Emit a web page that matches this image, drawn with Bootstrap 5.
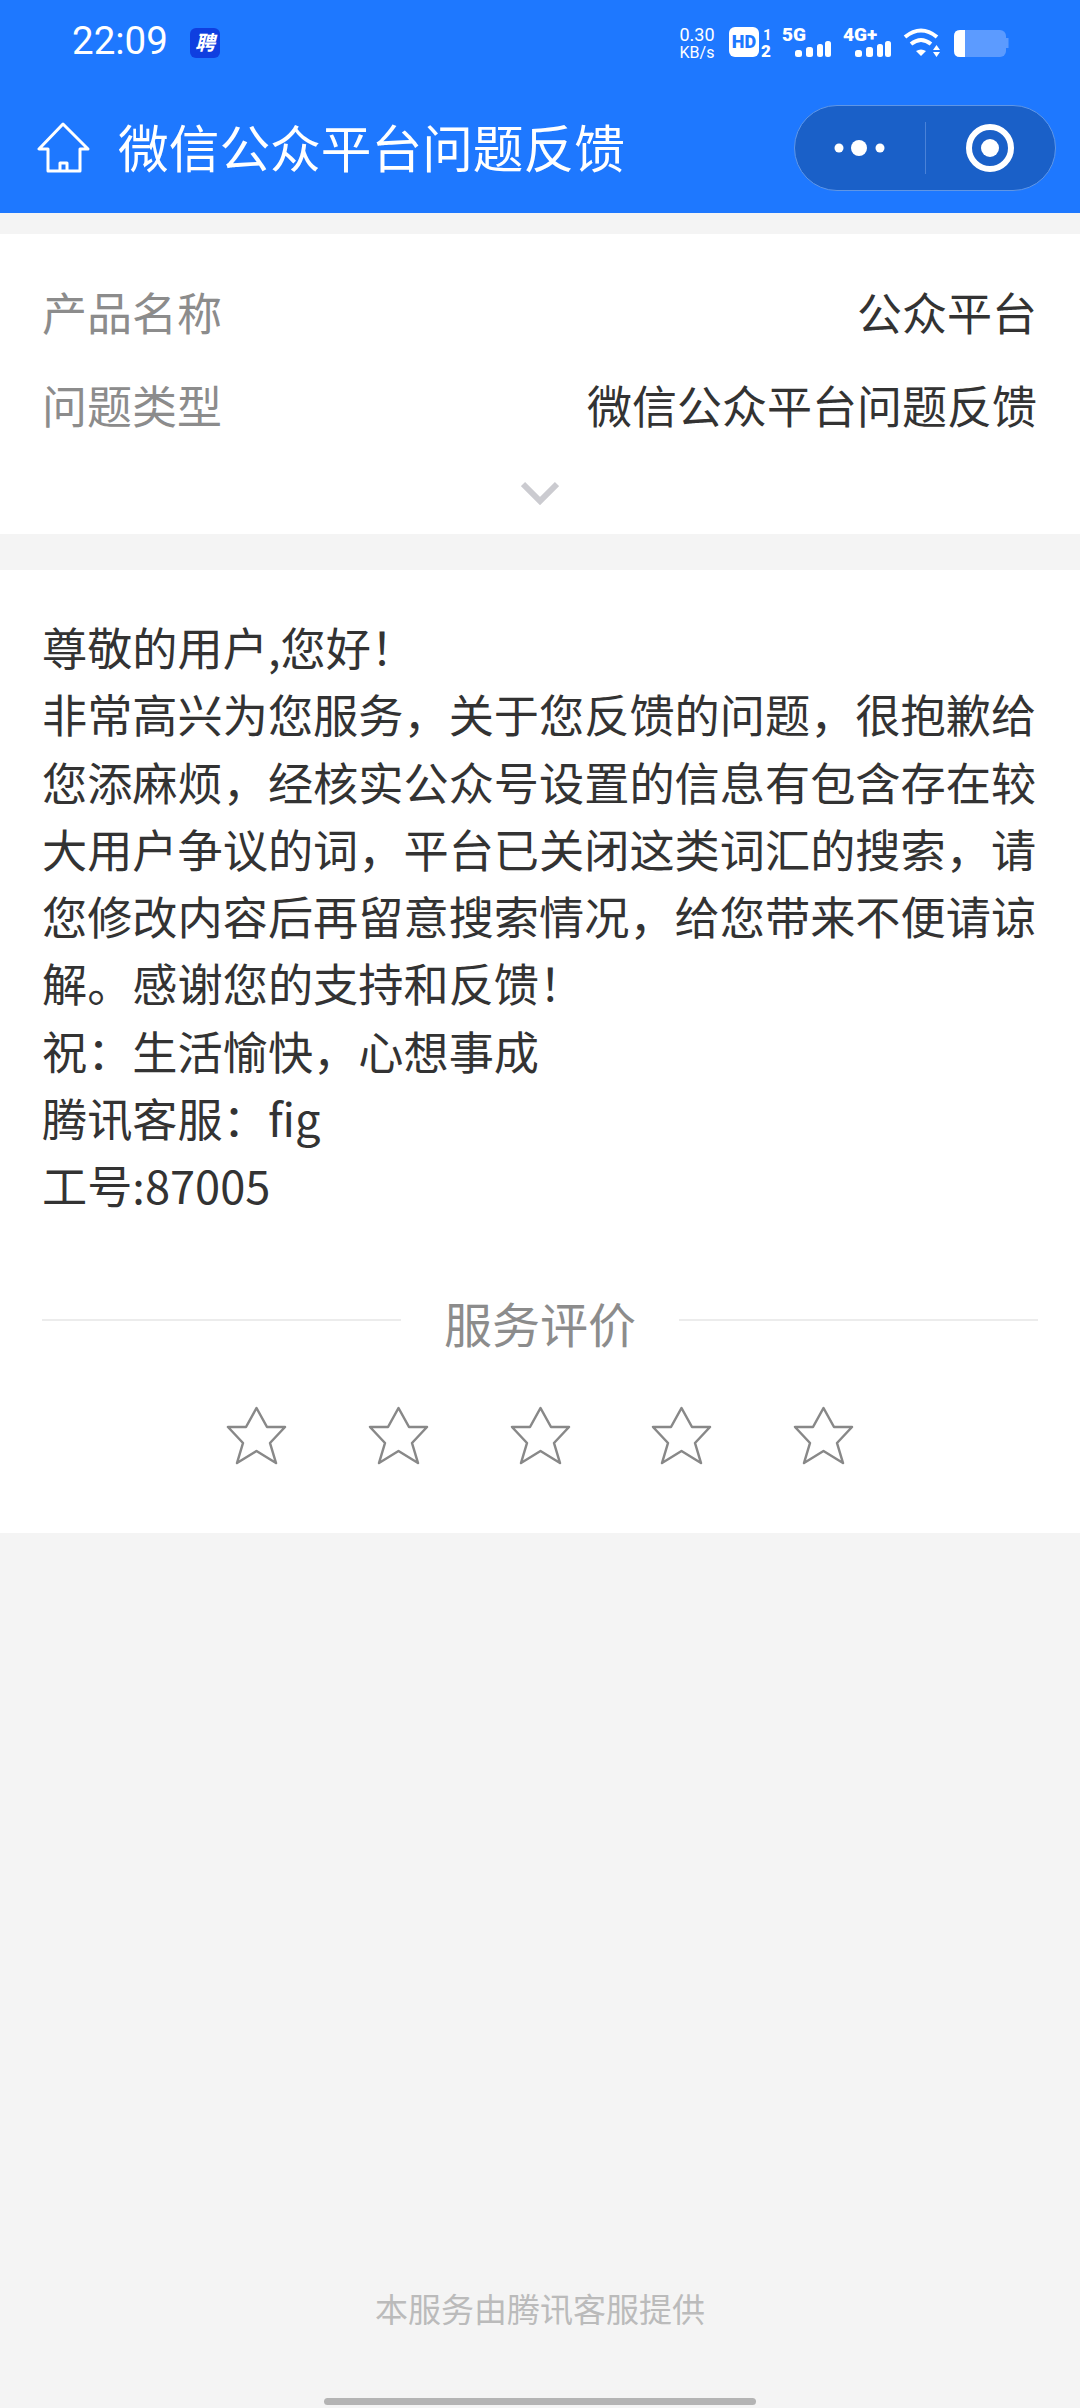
<!DOCTYPE html>
<html lang="zh-CN">
<head>
    <meta charset="UTF-8">
    <meta name="viewport" content="width=device-width, initial-scale=1.0">
    <title>微信公众平台问题反馈</title>
    <link href="https://cdn.jsdelivr.net/npm/bootstrap@5.3.0/dist/css/bootstrap.min.css" rel="stylesheet">
    <script src="https://cdn.jsdelivr.net/npm/bootstrap@5.3.0/dist/js/bootstrap.bundle.min.js"></script>
    <style>
        body {
            width: 1080px;
            height: 2408px;
            margin: 0;
            overflow: hidden;
            background-color: #f4f4f4;
            font-family: "Noto Sans CJK SC", "Noto Sans", sans-serif;
            font-variant-ligatures: none;
            color: #333;
        }
        .page-wrap { height: 2408px; }
        .top-head { height: 213px; background-color: #1e78ff; color: #fff; }
        .status-row { height: 83px; padding: 24px 65px 0 72px; font-family: Roboto, sans-serif; }
        .clock { font-size: 38.5px; line-height: 34px; width: 118px; }
        .net-speed { font-size: 18px; line-height: 17px; text-align: center; width: 42px; margin-top: 2px; margin-right: 11px; }
        .net-speed small { font-size: 16px; }
        .title-row { height: 130px; padding: 0 24px 0 37px; }
        .page-title { font-size: 50.7px; line-height: 60px; margin: -4px 0 0 27px; font-weight: 400; }
        .capsule {
            width: 262px; height: 86px; border-radius: 43px;
            background-color: #1a60c8; border: 1px solid #5f96e6;
        }
        .capsule-part { width: 130px; }
        .capsule-line { width: 1px; height: 52px; background-color: #4a82d8; }
        .info-block { margin-top: 21px; height: 300px; padding: 48px 43px 0 42px; }
        .info-line { height: 93px; font-size: 45px; line-height: 60px; }
        .info-key { color: #8c8c8c; }
        .chevron-row { margin-top: 13px; }
        .reply-block { margin-top: 36px; height: 963px; padding: 43px 42px 0; }
        .reply-text { font-size: 45.2px; line-height: 67.3px; }
        .rate-head { margin-top: 73px; color: #8c8c8c; font-size: 48px; line-height: 60px; }
        .rate-line { height: 2px; margin-top: -3px; background-color: #ececec; flex: 1; }
        .rate-name { padding: 0 43px; }
        .star-row { margin-top: 54px; gap: 80.8px; }
        .service-note { font-size: 33px; line-height: 40px; color: #bbb; position: absolute; left: 0; right: 0; top: 2288px; }
        .home-bar { position: absolute; left: 324px; top: 2398px; width: 432px; height: 7px; border-radius: 4px; background-color: #b4b4b4; }
    </style>
</head>
<body>
    <div class="page-wrap position-relative">
        <header class="top-head">
            <div class="status-row d-flex align-items-start">
                <div class="clock">22:09</div>
                <svg width="30" height="30" viewBox="0 0 30 30" class="mt-1" aria-hidden="true">
                    <rect width="30" height="30" rx="6" fill="#0f3fe0"/>
                    <text x="15" y="22" font-family="Noto Sans CJK SC" font-size="20" font-weight="700" font-style="italic" fill="#fff" text-anchor="middle">聘</text>
                </svg>
                <div class="net-speed ms-auto">0.30<br><small>KB/s</small></div>
                <svg width="286" height="36" viewBox="729 24 286 36" aria-hidden="true" fill="#fff">
                    <rect x="729" y="27" width="30" height="30" rx="6"/>
                    <text x="744" y="48" font-family="Roboto" font-size="18" font-weight="900" fill="#1e78ff" text-anchor="middle">HD</text>
                    <text x="763" y="40" font-family="Roboto" font-size="15" font-weight="700">1</text>
                    <text x="761" y="57" font-family="Roboto" font-size="17" font-weight="900">2</text>
                    <text x="782" y="41" font-family="Roboto" font-size="19" font-weight="900">5G</text>
                    <rect x="795" y="50" width="7" height="7" rx="2.5"/><rect x="806" y="47" width="7" height="10" rx="2.5"/>
                    <rect x="817" y="44" width="6" height="13" rx="2.5"/><rect x="825" y="41" width="6" height="16" rx="2.5"/>
                    <text x="843" y="41" font-family="Roboto" font-size="19" font-weight="900">4G+</text>
                    <rect x="855" y="50" width="7" height="7" rx="2.5"/><rect x="866" y="47" width="7" height="10" rx="2.5"/>
                    <rect x="877" y="44" width="6" height="13" rx="2.5"/><rect x="885" y="41" width="6" height="16" rx="2.5"/>
                    <path d="M905 37 Q921 24 937 37" stroke="#fff" stroke-width="4" fill="none"/>
                    <path d="M911 44 Q921 36 931 44" stroke="#fff" stroke-width="4" fill="none"/>
                    <path d="M916 51 Q921 48 926 51 L921 56 Z"/>
                    <path d="M933 50 L940 50 L936.5 45 Z M933 52 L940 52 L936.5 57 Z"/>
                    <rect x="954" y="30" width="52" height="27" rx="6" fill="#5c9bff"/>
                    <rect x="1006" y="38" width="2.5" height="10" fill="#5c9bff"/>
                    <path d="M960 30 L965 30 L965 57 L960 57 Q954 57 954 51 L954 36 Q954 30 960 30 Z"/>
                </svg>
            </div>
            <div class="title-row d-flex align-items-center">
                <svg width="54" height="52" viewBox="0 0 54 52" fill="none" stroke="#fff" stroke-width="3" stroke-linejoin="round" aria-hidden="true">
                    <path d="M26 2 L2 27 L11 27 L11 49 L43 49 L43 27 L51 27 Z"/>
                    <path d="M23 49 L23 41 L30 41 L30 49"/>
                </svg>
                <h1 class="page-title">微信公众平台问题反馈</h1>
                <div class="capsule ms-auto d-flex align-items-center">
                    <div class="capsule-part d-flex justify-content-center align-items-center gap-2">
                        <svg width="52" height="18" viewBox="0 0 52 18" fill="#fff" aria-hidden="true">
                            <circle cx="5" cy="9" r="4.5"/><circle cx="25" cy="9" r="8"/><circle cx="46" cy="9" r="4.5"/>
                        </svg>
                    </div>
                    <div class="capsule-line"></div>
                    <div class="capsule-part d-flex justify-content-center align-items-center">
                        <svg width="48" height="48" viewBox="0 0 48 48" aria-hidden="true">
                            <circle cx="24" cy="24" r="21" fill="none" stroke="#fff" stroke-width="6"/>
                            <circle cx="24" cy="24" r="9" fill="#fff"/>
                        </svg>
                    </div>
                </div>
            </div>
        </header>

        <section class="info-block bg-white">
            <div class="info-line d-flex justify-content-between">
                <span class="info-key">产品名称</span><span>公众平台</span>
            </div>
            <div class="info-line d-flex justify-content-between">
                <span class="info-key">问题类型</span><span>微信公众平台问题反馈</span>
            </div>
            <div class="chevron-row d-flex justify-content-center">
                <svg width="38" height="24" viewBox="0 0 38 24" fill="none" stroke="#cbcbd0" stroke-width="6" aria-hidden="true">
                    <path d="M2 3 L19 20 L36 3"/>
                </svg>
            </div>
        </section>

        <section class="reply-block bg-white">
            <div class="reply-text">尊敬的用户,您好！<br>非常高兴为您服务，关于您反馈的问题，很抱歉给您添麻烦，经核实公众号设置的信息有包含存在较大用户争议的词，平台已关闭这类词汇的搜索，请您修改内容后再留意搜索情况，给您带来不便请谅解。感谢您的支持和反馈！<br>祝：生活愉快，心想事成<br>腾讯客服：fig<br>工号:87005</div>
            <div class="rate-head d-flex align-items-center">
                <div class="rate-line"></div>
                <div class="rate-name">服务评价</div>
                <div class="rate-line"></div>
            </div>
            <div class="star-row d-flex justify-content-center">
                <svg width="61" height="59" viewBox="-2 -2 61 59" fill="none" stroke="#888" stroke-width="2.5" stroke-linejoin="round" aria-hidden="true"><path d="M28.5 0 L39 19 L57 19 L42 35 L48 55 L28.5 43 L9 55 L15 35 L0 19 L18 19 Z"/></svg>
                <svg width="61" height="59" viewBox="-2 -2 61 59" fill="none" stroke="#888" stroke-width="2.5" stroke-linejoin="round" aria-hidden="true"><path d="M28.5 0 L39 19 L57 19 L42 35 L48 55 L28.5 43 L9 55 L15 35 L0 19 L18 19 Z"/></svg>
                <svg width="61" height="59" viewBox="-2 -2 61 59" fill="none" stroke="#888" stroke-width="2.5" stroke-linejoin="round" aria-hidden="true"><path d="M28.5 0 L39 19 L57 19 L42 35 L48 55 L28.5 43 L9 55 L15 35 L0 19 L18 19 Z"/></svg>
                <svg width="61" height="59" viewBox="-2 -2 61 59" fill="none" stroke="#888" stroke-width="2.5" stroke-linejoin="round" aria-hidden="true"><path d="M28.5 0 L39 19 L57 19 L42 35 L48 55 L28.5 43 L9 55 L15 35 L0 19 L18 19 Z"/></svg>
                <svg width="61" height="59" viewBox="-2 -2 61 59" fill="none" stroke="#888" stroke-width="2.5" stroke-linejoin="round" aria-hidden="true"><path d="M28.5 0 L39 19 L57 19 L42 35 L48 55 L28.5 43 L9 55 L15 35 L0 19 L18 19 Z"/></svg>
            </div>
        </section>

        <div class="service-note text-center">本服务由腾讯客服提供</div>
        <div class="home-bar"></div>
    </div>
</body>
</html>
